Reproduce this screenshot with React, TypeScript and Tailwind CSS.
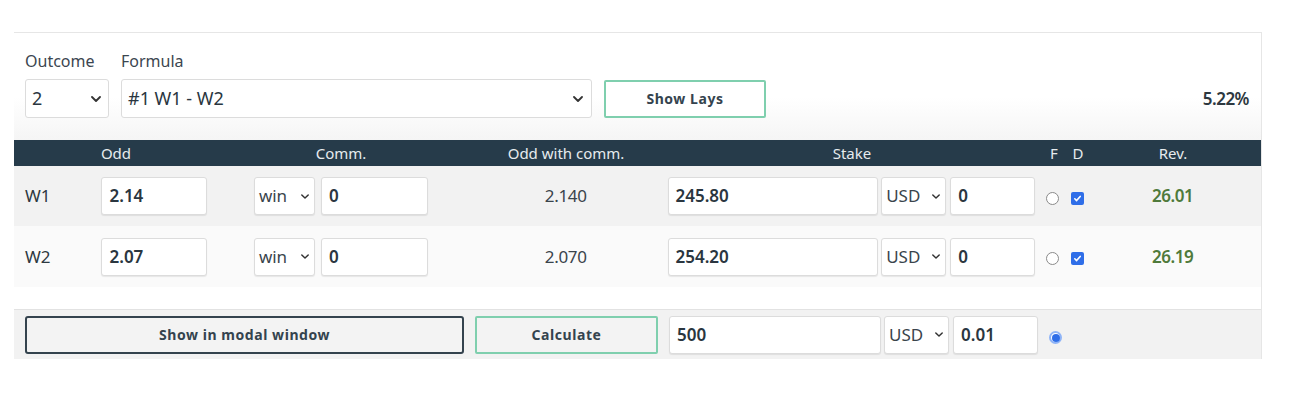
import React from "react";

const font = { fontFamily: "'Noto Sans', 'Open Sans', sans-serif" };

function Chevron({ className = "" }: { className?: string }) {
  return (
    <svg viewBox="0 0 10 6" className={className} fill="none" stroke="currentColor" strokeWidth="1.8" strokeLinecap="round" strokeLinejoin="round">
      <path d="M1 1l4 4 4-4" />
    </svg>
  );
}

function Field({ value, w, bold = true }: { value: string; w: string; bold?: boolean }) {
  return (
    <div className={`${w} flex h-[38px] items-center rounded-[3px] border border-[#dcdcdc] bg-white px-[7px] text-[17px] text-[#2a3640] shadow-[0_1px_1px_rgba(0,0,0,0.08)] ${bold ? "font-semibold" : ""}`}>
      {value}
    </div>
  );
}

function Select({ value, w }: { value: string; w: string }) {
  return (
    <div className={`${w} flex h-[38px] items-center justify-between rounded-[3px] border border-[#dcdcdc] bg-white pl-[4px] pr-[5px] text-[17px] text-[#3a444c] shadow-[0_1px_1px_rgba(0,0,0,0.08)]`}>
      <span>{value}</span>
      <Chevron className="h-[5px] w-[8px] text-[#333]" />
    </div>
  );
}

function Radio({ checked = false }: { checked?: boolean }) {
  if (checked) {
    return (
      <span className="flex h-[13px] w-[13px] items-center justify-center rounded-full border-2 border-[#8fb4f7] bg-white">
        <span className="h-[8px] w-[8px] rounded-full bg-[#2f6ee8]" />
      </span>
    );
  }
  return <span className="h-[13px] w-[13px] rounded-full border border-[#8a8a8a] bg-white" />;
}

function Check() {
  return (
    <span className="flex h-[13px] w-[13px] items-center justify-center rounded-[2px] bg-[#2f6ee8]">
      <svg viewBox="0 0 10 10" className="h-[9px] w-[9px]" fill="none" stroke="white" strokeWidth="1.8" strokeLinecap="round" strokeLinejoin="round">
        <path d="M2 5.3l2 2 4-4.6" />
      </svg>
    </span>
  );
}

const rows = [
  { name: "W1", odd: "2.14", withComm: "2.140", stake: "245.80", rev: "26.01", bg: "bg-[#f2f2f2]", h: "h-[60px]" },
  { name: "W2", odd: "2.07", withComm: "2.070", stake: "254.20", rev: "26.19", bg: "bg-[#fafafa]", h: "h-[61px]" },
];

export default function App() {
  return (
    <div className="min-h-[394px] w-[1308px] bg-white pt-[32px]" style={font}>
      <div className="ml-[14px] w-[1248px] border-r border-t border-[#e6e6e6]">
        {/* top: outcome & formula */}
        <div className="bg-gradient-to-b from-white from-60% to-[#f5f5f5] px-[11px] pb-[22px] pt-[16px]">
          <div className="flex gap-[12px] text-[16px] text-[#3b4650]">
            <span className="w-[84px]">Outcome</span>
            <span>Formula</span>
          </div>
          <div className="mt-[6px] flex items-center">
            <div className="flex h-[39px] w-[84px] items-center justify-between rounded-[3px] border border-[#dcdcdc] bg-white pl-[6px] pr-[7px] text-[18px] text-[#2a3640]">
              <span>2</span>
              <Chevron className="h-[6px] w-[10px] text-[#333]" />
            </div>
            <div className="ml-[12px] flex h-[39px] w-[471px] items-center justify-between rounded-[3px] border border-[#dcdcdc] bg-white pl-[6px] pr-[8px] text-[18px] text-[#2a3640]">
              <span>#1 W1 - W2</span>
              <Chevron className="h-[6px] w-[10px] text-[#333]" />
            </div>
            <button className="ml-[12px] h-[38px] w-[162px] rounded-[2px] border-2 border-[#7fcfae] bg-white text-[14px] font-bold tracking-[0.04em] text-[#34434e]">
              Show Lays
            </button>
            <span className="ml-auto pr-[1px] text-[17px] font-semibold tracking-[-0.03em] text-[#2d3840]">5.22%</span>
          </div>
        </div>

        {/* header */}
        <div className="flex h-[26px] items-center bg-[#263b4a] text-[15px] text-[#e6ebee]">
          <span className="w-[204px] text-center">Odd</span>
          <span className="w-[246px] text-center">Comm.</span>
          <span className="w-[204px] text-center">Odd with comm.</span>
          <span className="w-[368px] text-center">Stake</span>
          <span className="ml-[6px] w-[24px] text-center">F</span>
          <span className="w-[24px] text-center">D</span>
          <span className="w-[166px] text-center">Rev.</span>
        </div>

        {/* rows */}
        {rows.map((r) => (
          <div key={r.name} className={`flex ${r.h} items-center ${r.bg}`}>
            <span className="w-[88px] pl-[11px] text-[17px] text-[#2d3840]">{r.name}</span>
            <Field value={r.odd} w="w-[106px]" />
            <div className="ml-[47px] flex gap-[6px]">
              <Select value="win" w="w-[61px]" />
              <Field value="0" w="w-[107px]" />
            </div>
            <span className="w-[241px] pl-[36px] text-center text-[17px] tracking-[-0.02em] text-[#3a444c]">{r.withComm}</span>
            <Field value={r.stake} w="w-[212px]" />
            <div className="ml-[3px] flex gap-[4px]">
              <Select value="USD" w="w-[65px]" />
              <Field value="0" w="w-[85px]" />
            </div>
            <div className="ml-[11px] mt-[4px] flex items-center gap-[12px]">
              <Radio />
              <Check />
            </div>
            <span className="w-[178px] text-center text-[17px] font-semibold tracking-[-0.03em] text-[#4f7a3b]">{r.rev}</span>
          </div>
        ))}

        {/* bottom */}
        <div className="mt-[22px] flex h-[50px] items-center border-t border-[#e2e2e2] bg-[#f2f2f2] pl-[11px]">
          <button className="h-[38px] w-[439px] rounded-[3px] border-2 border-[#34434e] bg-[#f3f3f3] text-[14px] font-bold tracking-[0.04em] text-[#34434e]">
            Show in modal window
          </button>
          <button className="ml-[11px] h-[38px] w-[183px] rounded-[2px] border-2 border-[#7fcfae] bg-[#f3f3f3] text-[14px] font-bold tracking-[0.04em] text-[#34434e]">
            Calculate
          </button>
          <div className="ml-[11px]">
            <Field value="500" w="w-[212px]" />
          </div>
          <div className="ml-[3px] flex gap-[4px]">
            <Select value="USD" w="w-[65px]" />
            <Field value="0.01" w="w-[85px]" />
          </div>
          <div className="ml-[11px] mt-[6px]">
            <Radio checked />
          </div>
        </div>
      </div>
    </div>
  );
}
